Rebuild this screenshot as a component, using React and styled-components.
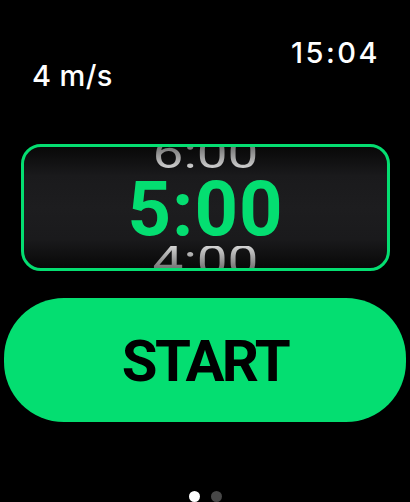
import React from "react";
import styled, { createGlobalStyle } from "styled-components";

const GREEN = "#04de71";

const GlobalStyle = createGlobalStyle`
  html, body {
    margin: 0;
    padding: 0;
    background: #000;
  }
  body {
    font-family: Inter, "Noto Sans", sans-serif;
    color: #fff;
  }
`;

const Screen = styled.div`
  width: 410px;
  height: 502px;
  overflow: hidden;
  display: flex;
  flex-direction: column;
  background: #000;
`;

const Header = styled.div`
  display: flex;
  justify-content: space-between;
  align-items: flex-start;
  padding: 42px 30px 0 32px;
`;

const Title = styled.div`
  margin-top: 23px;
  font-size: 29px;
  line-height: 21px;
  font-weight: 500;
  letter-spacing: 0.4px;
  color: #fff;
`;

const Clock = styled.div`
  font-size: 29px;
  line-height: 21px;
  font-weight: 500;
  letter-spacing: 2.5px;
  color: #fff;
`;

const Picker = styled.div`
  margin: 58px 20px 0 21px;
  height: 127px;
  box-sizing: border-box;
  border: 3px solid ${GREEN};
  border-radius: 20px;
  overflow: hidden;
  display: flex;
  flex-direction: column;
  align-items: center;
  justify-content: center;
  background: linear-gradient(
    to bottom,
    #080808 0%,
    #1a1a1c 24%,
    #1d1d1f 50%,
    #1a1a1c 76%,
    #080808 100%
  );
  font-family: Roboto, "Liberation Sans", sans-serif;
`;

const WheelItem = styled.div`
  font-size: 55px;
  line-height: 39px;
  font-weight: 400;
  color: transparent;
  background: linear-gradient(
    ${(p) => (p.$side === "top" ? "to bottom" : "to top")},
    #555 0%,
    #d4d4d4 100%
  );
  -webkit-background-clip: text;
  background-clip: text;
  transform: scaleY(0.76);
  transform-origin: ${(p) => (p.$side === "top" ? "bottom" : "top")};
  margin: ${(p) => (p.$side === "top" ? "0 0 13px" : "10px 0 0")};
`;

const Current = styled.div`
  font-size: 76px;
  line-height: 54px;
  font-weight: 700;
  color: ${GREEN};
  letter-spacing: 1px;
`;

const StartButton = styled.button`
  margin: 27px 4px 0 4px;
  height: 125px;
  border: none;
  border-radius: 60px;
  background: ${GREEN};
  display: flex;
  align-items: center;
  justify-content: center;
  padding: 4px 0 0;
  font-family: Roboto, "Liberation Sans", sans-serif;
  font-size: 58px;
  line-height: 41px;
  font-weight: 700;
  letter-spacing: -2.5px;
  color: #000;
  cursor: pointer;
`;

const Dots = styled.div`
  display: flex;
  justify-content: center;
  gap: 11px;
  margin-top: 69px;
`;

const Dot = styled.span`
  width: 11px;
  height: 11px;
  border-radius: 50%;
  background: ${(p) => (p.$active ? "#fff" : "#474747")};
`;

export default function App() {
  return (
    <>
      <GlobalStyle />
      <Screen>
        <Header>
          <Title>4 m/s</Title>
          <Clock>15:04</Clock>
        </Header>
        <Picker>
          <WheelItem $side="top">6:00</WheelItem>
          <Current>5:00</Current>
          <WheelItem $side="bottom">4:00</WheelItem>
        </Picker>
        <StartButton>START</StartButton>
        <Dots>
          <Dot $active />
          <Dot />
        </Dots>
      </Screen>
    </>
  );
}
